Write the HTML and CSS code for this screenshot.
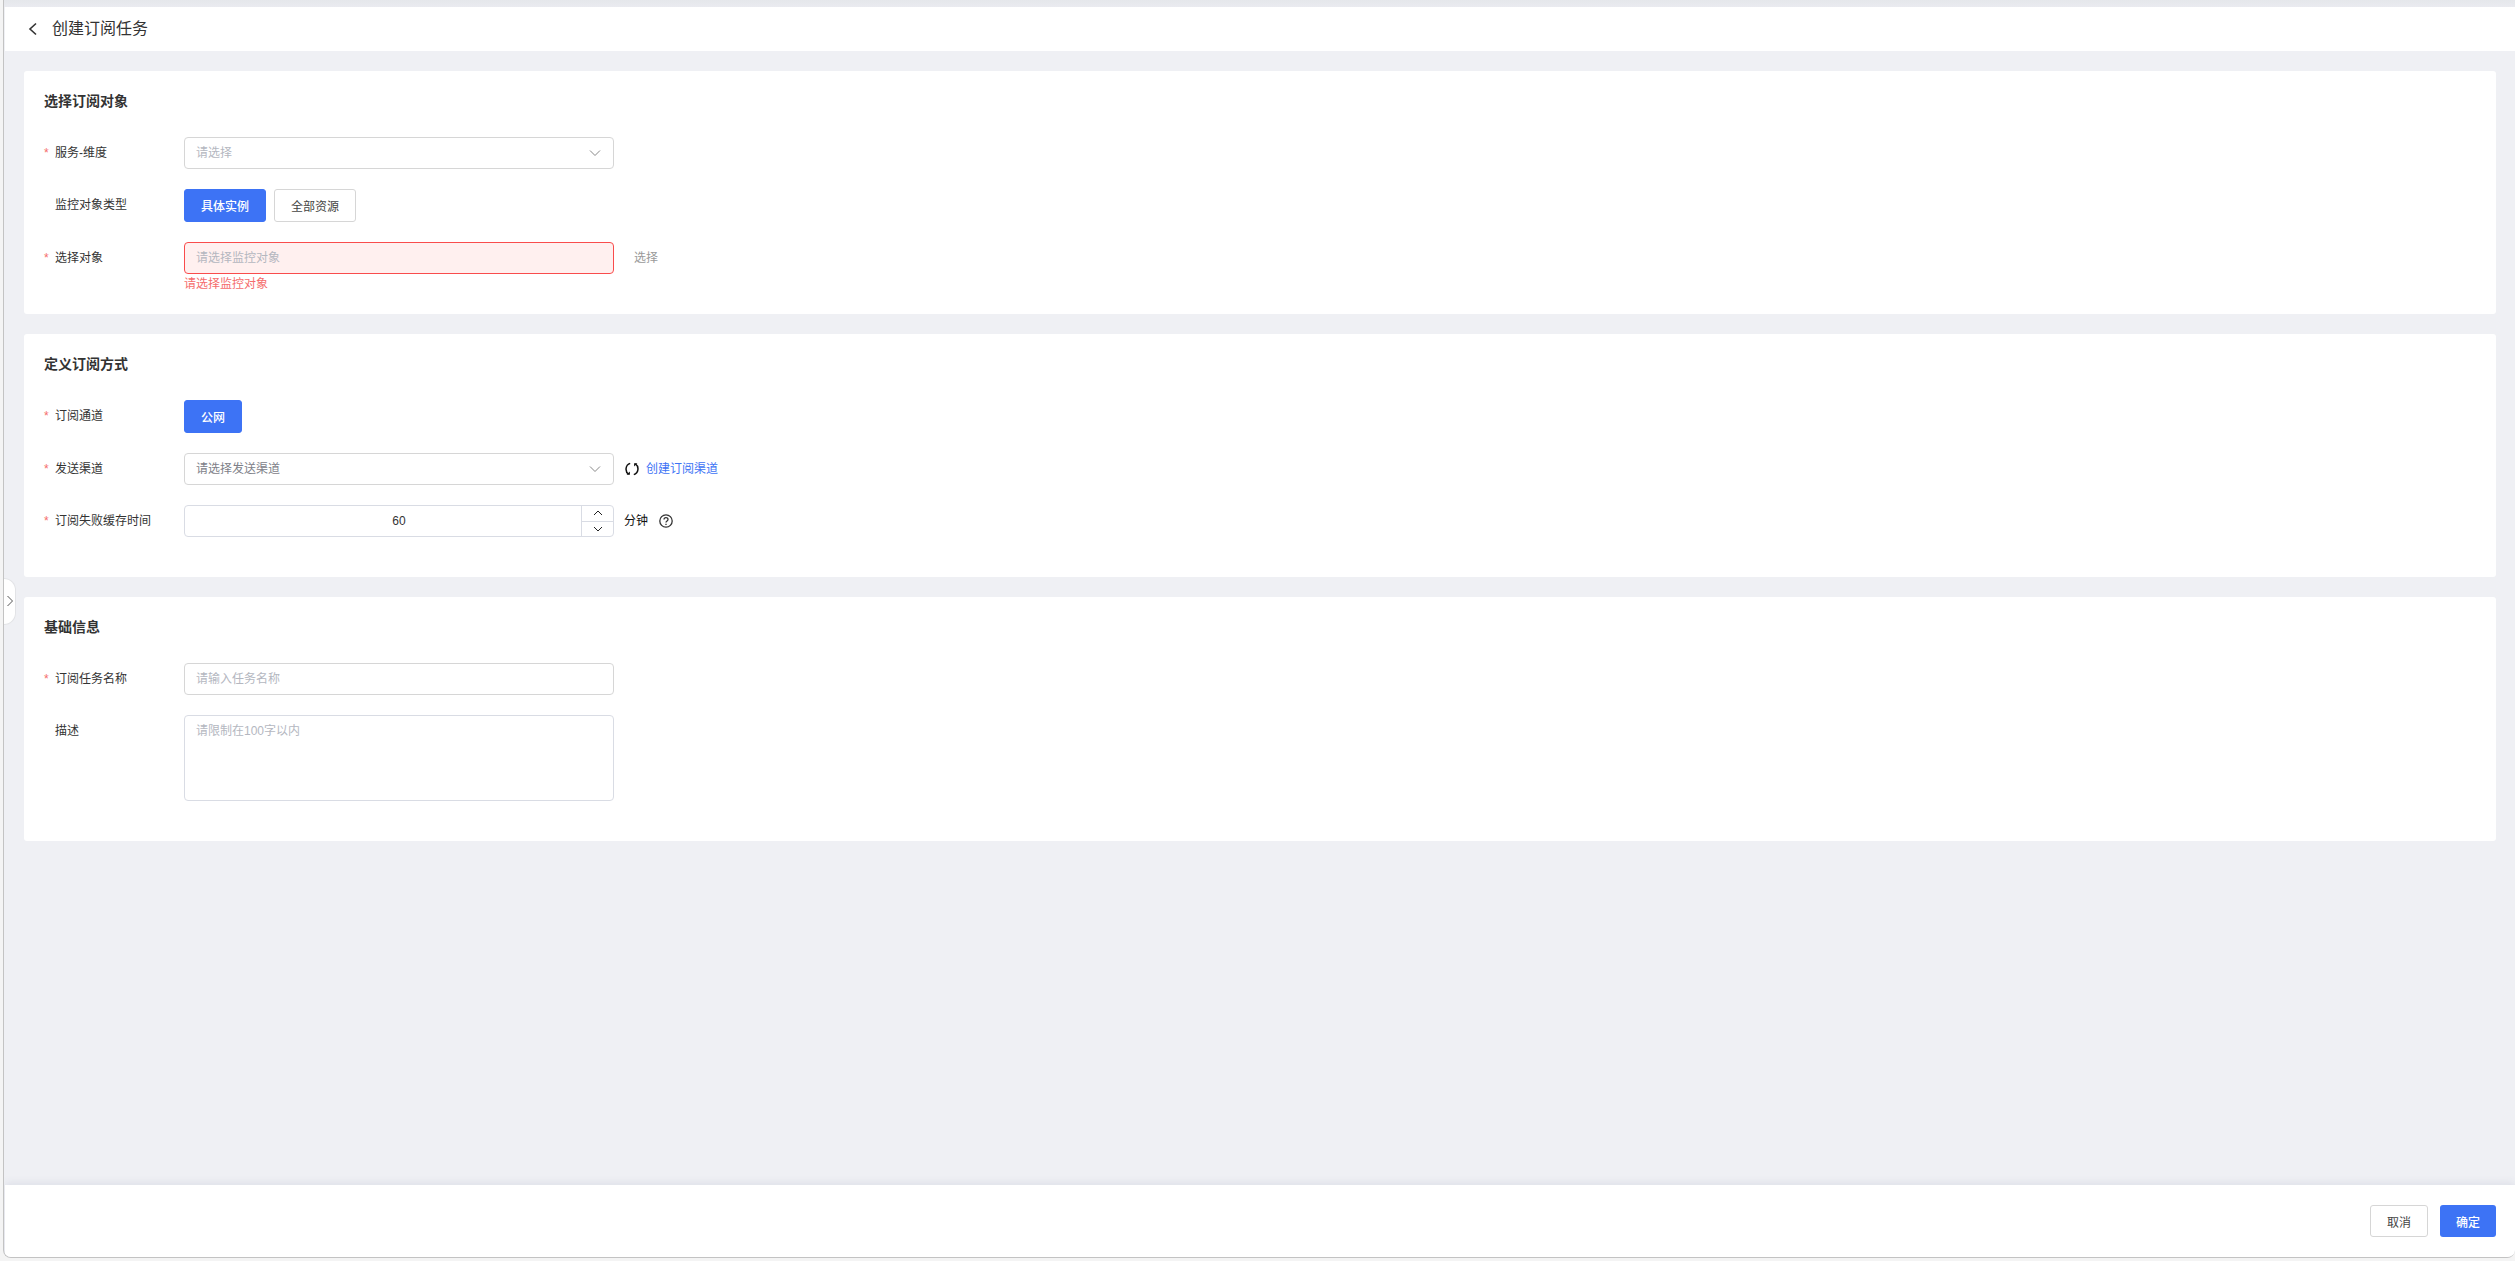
FILE: index.html
```
<!DOCTYPE html>
<html lang="zh-CN">
<head>
<meta charset="utf-8">
<title>创建订阅任务</title>
<link rel="stylesheet" href="styles.css">
</head>

<body>
<div class="frame">
	<div class="topbar"></div>
	<header class="header">
		<button type="button" class="back" aria-label="返回">
			<svg width="10" height="14" viewBox="0 0 10 14"><path d="M8 1.5L2 7l6 5.5"/></svg>
		</button>
		<h1>创建订阅任务</h1>
	</header>

	<form class="main" id="taskForm">
		<section class="card">
			<h2>选择订阅对象</h2>
			<div class="row">
				<label class="label required" for="service">服务-维度</label>
				<div class="select">
					<select id="service" class="input empty"><option>请选择</option></select>
					<svg class="arrow" width="12" height="8" viewBox="0 0 12 8"><path d="M1 1.5l5 5 5-5"/></svg>
				</div>
			</div>
			<div class="row">
				<span class="label">监控对象类型</span>
				<div class="btns">
					<button type="button" class="btn tall primary">具体实例</button>
					<button type="button" class="btn tall">全部资源</button>
				</div>
			</div>
			<div class="row">
				<label class="label required" for="target">选择对象</label>
				<div class="field">
					<input id="target" class="input error" type="text" placeholder="请选择监控对象">
					<p class="msg">请选择监控对象</p>
				</div>
				<button type="button" class="pick">选择</button>
			</div>
		</section>

		<section class="card">
			<h2>定义订阅方式</h2>
			<div class="row">
				<span class="label required">订阅通道</span>
				<button type="button" class="btn tall primary">公网</button>
			</div>
			<div class="row">
				<label class="label required" for="channel">发送渠道</label>
				<div class="select">
					<select id="channel" class="input chosen"><option>请选择发送渠道</option></select>
					<svg class="arrow" width="12" height="8" viewBox="0 0 12 8"><path d="M1 1.5l5 5 5-5"/></svg>
				</div>
				<div class="after">
					<button type="button" class="icon-btn" aria-label="刷新">
						<svg width="14" height="14" viewBox="0 0 14 14"><path class="arc" d="M5.2 1.4C.2 3-.2 9.6 3.6 12.2M8.8 12.6C13.800 11 14.200 4.400 10.400 1.800"/><path class="tip" d="M1.600 12.800h3.300V9.600zM12.400 1.200H9.100v3.200z"/></svg>
					</button>
					<a href="#">创建订阅渠道</a>
				</div>
			</div>
			<div class="row">
				<label class="label required" for="cache">订阅失败缓存时间</label>
				<div class="number">
					<input id="cache" class="input" type="text" inputmode="numeric" value="60">
					<div class="steps">
						<button type="button" aria-label="增加"><svg width="10" height="6" viewBox="0 0 10 6"><path d="M1 5l4-4 4 4"/></svg></button>
						<button type="button" aria-label="减少"><svg width="10" height="6" viewBox="0 0 10 6"><path d="M1 1l4 4 4-4"/></svg></button>
					</div>
				</div>
				<div class="after unit">
					<span>分钟</span>
					<svg class="help" width="14" height="14" viewBox="0 0 14 14"><circle cx="7" cy="7" r="6.200"/><path d="M5 5.600C5 2.900 9 2.900 9 5.400 9 6.900 7 6.900 7 8.600M7 9.700v1.300"/></svg>
				</div>
			</div>
		</section>

		<section class="card">
			<h2>基础信息</h2>
			<div class="row">
				<label class="label required" for="name">订阅任务名称</label>
				<input id="name" class="input" type="text" placeholder="请输入任务名称">
			</div>
			<div class="row">
				<label class="label" for="desc">描述</label>
				<textarea id="desc" class="input area" placeholder="请限制在100字以内"></textarea>
			</div>
		</section>
	</form>

	<footer class="footer">
		<button type="button" class="btn">取消</button>
		<button type="submit" form="taskForm" class="btn primary flat">确定</button>
	</footer>
</div>
<button type="button" class="handle" aria-label="展开菜单">
	<svg width="8" height="12" viewBox="0 0 8 12"><path d="M1.500 1L6.500 6l-5 5"/></svg>
</button>
</body>
</html>
```
FILE: styles.css
```
*{ margin:0; padding:0; box-sizing:border-box;}
body{ height:100vh; padding:0 0 3px 3px; background:#f4f4f4; color:#333; font-family:"Liberation Sans","Noto Sans CJK SC",sans-serif; font-size:12px;}
button, input, select, textarea{ font:inherit; color:inherit;}
button{ background:none; border:0; cursor:pointer;}
svg{ display:block; fill:none; stroke:currentColor;}
a{ color:#3d73f5; text-decoration:none;}

.frame{ height:100%; display:flex; flex-direction:column; background:#eff0f4; border:solid #c3c3c3; border-width:0 0 1px 1px; border-radius:0 0 8px 8px; overflow:hidden;}
.topbar{ height:7px; flex:none; background:linear-gradient(#e5e7eb,#eaebf0);}
.header{ height:44px; flex:none; margin-left:1px; padding-left:23px; display:flex; align-items:center; gap:13px; background:#fff;}
.header h1{ font-size:16px; font-weight:normal; line-height:24px;}
.back{ width:11px; display:flex; stroke-width:1.6;}

/* 表单 */
.main{ flex:1; min-height:0; overflow:auto; padding:20px 19px 20px 20px;}
.card{ padding:20px 20px 40px; margin-bottom:20px; background:#fff; border-radius:3px;}
.card h2{ margin-bottom:26px; font-size:14px; line-height:20px;}
.row{ display:flex; align-items:flex-start;}
.row + .row{ margin-top:20px;}
.label{ width:140px; flex:none; padding-left:11px; line-height:32px; position:relative;}
.required:before{ content:"*"; position:absolute; left:0; top:0; color:#f56c6c;}

.input{ display:block; width:430px; height:32px; padding:0 11px; border:1px solid #d6d6d6; border-radius:4px; background:#fff; outline:none;}
.input::placeholder{ color:#b4b7bf;}
.field, .select, .number{ position:relative; width:430px;}
.select select{ appearance:none; cursor:pointer;}
.empty{ color:#b4b7bf;}
.chosen{ color:#7d8088;}
.arrow{ position:absolute; right:13px; top:12px; color:#888; pointer-events:none;}
.area{ height:86px; padding:6px 11px; line-height:18px; resize:none; border-color:#d9dce4;}
.error{ border-color:#f94c4c; background:#fff0ef;}
.msg{ position:absolute; left:0; top:100%; padding-top:2px; line-height:16px; color:#f56c6c;}
.pick{ margin-left:20px; line-height:32px; color:#999;}

.number input{ padding:0 32px; text-align:center; border-color:#d9dce4;}
.steps{ position:absolute; top:1px; right:1px; bottom:1px; width:32px; display:flex; flex-direction:column; border-left:1px solid #d9dce4;}
.steps button{ flex:1; display:flex; align-items:center; justify-content:center; color:#222;}
.steps button + button{ border-top:1px solid #d9dce4;}

.after{ display:flex; align-items:center; gap:7px; margin-left:11px; line-height:32px;}
.unit{ gap:11px; margin-left:10px; color:#111;}
.icon-btn{ color:#111;}
.arc{ stroke-width:1.5;}
.tip{ fill:currentColor; stroke:none;}
.help{ color:#333; stroke-width:1.3;}

/* 按钮 */
.btns{ display:flex; gap:8px;}
.btn{ height:32px; padding:0 16px; border:1px solid #d6d6d6; border-radius:3px; background:#fff; color:#444;}
.tall{ height:33px;}
.primary{ border-color:#3d73f5; background:#3d73f5; color:#fff; font-weight:500;}
.flat{ border:0;}

.footer{ flex:none; display:flex; justify-content:flex-end; gap:12px; margin-left:1px; padding:20px 19px; background:#fff; box-shadow:0 -2px 8px rgba(70,80,130,.1); position:relative;}
.handle{ position:absolute; left:4px; top:calc(50% - 53px); width:12px; height:47px; padding-left:2px; background:#fff; border:1px solid #e2e3e6; border-left:0; border-radius:0 12px 12px 0; color:#555;}
```
